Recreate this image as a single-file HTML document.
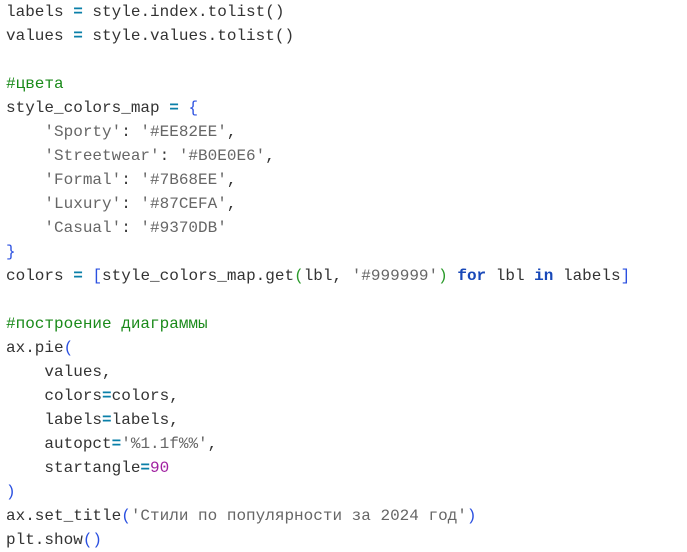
<!DOCTYPE html><html><head><meta charset="utf-8"><style>
html,body{margin:0;padding:0;background:#fff;width:687px;height:552px;overflow:hidden}
pre{margin:0;position:absolute;left:6px;top:0;font-family:"Liberation Mono","DejaVu Sans Mono",monospace;font-size:16px;line-height:24px;color:#333}
.o{color:#0a7fa8;font-weight:bold}.s{color:#666}.c{color:#1a8a1a}.b{color:#2b50e0}.p{color:#2a9a2a}.k{color:#1848b8;font-weight:bold}.n{color:#a020a0}
</style></head><body><pre>labels <span class="o">=</span> style.index.tolist()
values <span class="o">=</span> style.values.tolist()

<span class="c">#цвета</span>
style_colors_map <span class="o">=</span> <span class="b">{</span>
    <span class="s">'Sporty'</span>: <span class="s">'#EE82EE'</span>,
    <span class="s">'Streetwear'</span>: <span class="s">'#B0E0E6'</span>,
    <span class="s">'Formal'</span>: <span class="s">'#7B68EE'</span>,
    <span class="s">'Luxury'</span>: <span class="s">'#87CEFA'</span>,
    <span class="s">'Casual'</span>: <span class="s">'#9370DB'</span>
<span class="b">}</span>
colors <span class="o">=</span> <span class="b">[</span>style_colors_map.get<span class="p">(</span>lbl, <span class="s">'#999999'</span><span class="p">)</span> <span class="k">for</span> lbl <span class="k">in</span> labels<span class="b">]</span>

<span class="c">#построение диаграммы</span>
ax.pie<span class="b">(</span>
    values,
    colors<span class="o">=</span>colors,
    labels<span class="o">=</span>labels,
    autopct<span class="o">=</span><span class="s">'%1.1f%%'</span>,
    startangle<span class="o">=</span><span class="n">90</span>
<span class="b">)</span>
ax.set_title<span class="b">(</span><span class="s">'Стили по популярности за 2024 год'</span><span class="b">)</span>
plt.show<span class="b">()</span></pre></body></html>
